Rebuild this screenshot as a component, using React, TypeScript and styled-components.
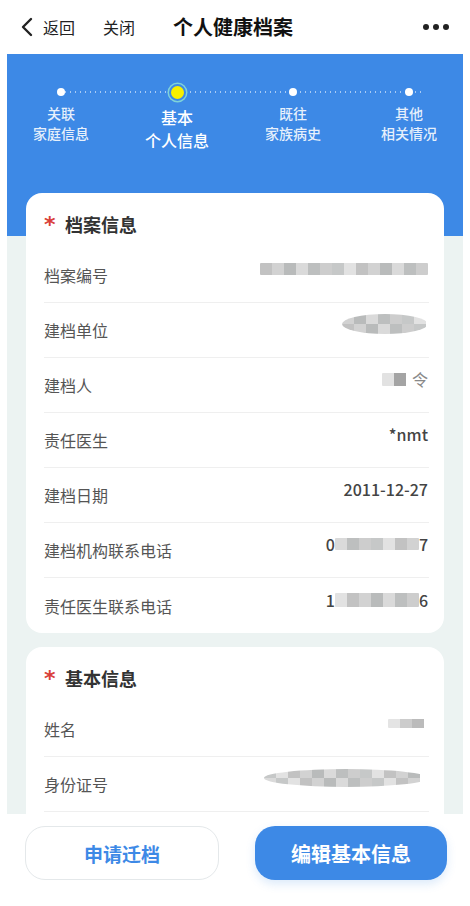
import styled, { createGlobalStyle } from "styled-components";

const colors = {
  blue: "#3d89e6",
  pageBg: "#ecf3f2",
  red: "#d9403a",
  title: "#333333",
  label: "#555555",
  value: "#444444",
  line: "#efefef",
};

const GlobalStyle = createGlobalStyle`
  html, body {
    margin: 0;
    padding: 0;
    background: #ffffff;
  }
  body {
    font-family: "Noto Sans CJK SC", "Noto Sans", sans-serif;
    -webkit-font-smoothing: antialiased;
  }
  * {
    box-sizing: border-box;
  }
`;

const NavBar = styled.header`
  height: 54px;
  display: flex;
  align-items: center;
  padding: 0 20px 0 20px;
  background: #ffffff;
  color: #111111;
`;

const NavLink = styled.span`
  font-size: 16px;
  line-height: 20px;
  color: #222222;
  margin-right: 28px;
  display: flex;
  align-items: center;
`;

const NavTitle = styled.h1`
  margin: 0 0 0 10px;
  font-size: 20px;
  font-weight: 600;
  line-height: 24px;
  color: #111111;
  flex: 1;
`;

const MoreDots = styled.div`
  display: flex;
  gap: 4px;
  margin-right: 1px;

  span {
    width: 6px;
    height: 6px;
    border-radius: 50%;
    background: #222222;
  }
`;

const Page = styled.main`
  margin: 0 7px;
  padding-bottom: 100px;
  background: linear-gradient(
    ${colors.blue} 0,
    ${colors.blue} 182px,
    ${colors.pageBg} 182px
  );
`;

const Stepper = styled.div`
  position: relative;
  display: grid;
  grid-template-columns: repeat(4, 116px);
  justify-content: center;
  padding-top: 29px;
  margin: 0 -4px;
`;

const StepLine = styled.div`
  position: absolute;
  top: 37px;
  left: 60px;
  right: 44px;
  height: 2px;
  background-image: radial-gradient(
    circle,
    rgba(255, 255, 255, 0.55) 0.9px,
    transparent 1.1px
  );
  background-size: 5px 2px;
`;

const Step = styled.div`
  position: relative;
  display: flex;
  flex-direction: column;
  align-items: center;
`;

const DotRow = styled.div`
  height: 18px;
  display: flex;
  align-items: center;
  justify-content: center;
`;

const Dot = styled.span<{ $active?: boolean }>`
  display: block;
  border-radius: 50%;
  ${(p) =>
    p.$active
      ? `
    width: 17px;
    height: 17px;
    background: #f8f000;
    border: 2px solid ${colors.blue};
    box-shadow: 0 0 0 1.5px #7fd3d8;
  `
      : `
    width: 8px;
    height: 8px;
    background: #ffffff;
  `}
`;

const StepLabel = styled.div<{ $active?: boolean }>`
  margin-top: ${(p) => (p.$active ? "5px" : "2px")};
  text-align: center;
  font-size: ${(p) => (p.$active ? "16px" : "14px")};
  line-height: ${(p) => (p.$active ? "23px" : "20px")};
  color: ${(p) => (p.$active ? "#ffffff" : "rgba(255, 255, 255, 0.88)")};
  font-weight: 500;
`;

const Cards = styled.div`
  display: flex;
  flex-direction: column;
  gap: 14px;
  padding: 41px 19px 0 19px;
`;

const Card = styled.section`
  background: #ffffff;
  border-radius: 16px;
  padding: 0 15px 0 18px;
`;

const CardHeader = styled.div`
  height: 55px;
  padding-top: 20px;
  display: flex;
  align-items: flex-start;
`;

const Star = styled.span`
  color: ${colors.red};
  font-size: 22px;
  line-height: 24px;
  font-weight: 700;
  width: 21px;
  font-family: "DejaVu Sans", sans-serif;
`;

const CardTitle = styled.h2`
  margin: 0;
  font-size: 18px;
  line-height: 22px;
  font-weight: 700;
  color: ${colors.title};
`;

const Row = styled.div`
  height: 55px;
  display: flex;
  align-items: center;
  justify-content: space-between;
  border-bottom: 1px solid ${colors.line};

  &:last-child {
    border-bottom: none;
  }
`;

const Label = styled.span`
  font-size: 16px;
  line-height: 20px;
  color: ${colors.label};
`;

const Value = styled.span`
  display: flex;
  align-items: center;
  font-size: 16px;
  line-height: 20px;
  font-weight: 500;
  color: ${colors.value};
  margin-bottom: 12px;
  margin-right: 1px;
`;

const Mosaic = styled.span<{ $h: number; $round?: boolean }>`
  display: flex;
  flex-wrap: wrap;
  height: ${(p) => p.$h}px;
  overflow: hidden;
  border-radius: ${(p) => (p.$round ? "50%" : "1px")};
`;

const Cell = styled.span<{ $w: number; $h: number }>`
  display: block;
  width: ${(p) => p.$w}px;
  height: ${(p) => p.$h}px;
`;

const Footer = styled.footer`
  position: fixed;
  left: 0;
  right: 0;
  bottom: 0;
  height: 92px;
  background: #ffffff;
  display: flex;
  align-items: flex-start;
  justify-content: space-between;
  padding: 12px 23px 0 25px;
`;

const Button = styled.button<{ $primary?: boolean }>`
  height: 54px;
  border-radius: 20px;
  font-family: inherit;
  font-size: 19px;
  font-weight: 600;
  cursor: pointer;
  ${(p) =>
    p.$primary
      ? `
    width: 192px;
    border: none;
    background: ${colors.blue};
    color: #ffffff;
    font-size: 20px;
    box-shadow: 0 4px 10px rgba(61, 137, 230, 0.18);
  `
      : `
    width: 194px;
    border: 1px solid #e4e8ea;
    background: #ffffff;
    color: ${colors.blue};
  `}
`;

type Blur = { width: number; height: number; shades: string[]; round?: boolean };

const makeShades = (seed: number, count: number) => {
  const palette = ["#cdcdcd", "#c2c2c2", "#dadada", "#c6c8c8", "#d2d2d2", "#bdbfbf", "#e2e2e2", "#b9bbbb"];
  return Array.from({ length: count }, (_, i) => palette[(i * 3 + seed) % palette.length]);
};

const Blurred = ({ width, height, shades, round }: Blur) => {
  const rows = height > 14 ? 2 : 1;
  const cellW = 12;
  const perRow = Math.ceil(width / cellW);
  return (
    <Mosaic $h={height} $round={round} style={{ width }}>
      {Array.from({ length: perRow * rows }, (_, i) => (
        <Cell key={i} $w={cellW} $h={height / rows} style={{ background: shades[i % shades.length] }} />
      ))}
    </Mosaic>
  );
};

type Field = { label: string; value: React.ReactNode };

const archiveFields: Field[] = [
  { label: "档案编号", value: <Blurred width={168} height={12} shades={makeShades(1, 14)} /> },
  { label: "建档单位", value: <Blurred width={86} height={20} shades={makeShades(4, 16)} round /> },
  {
    label: "建档人",
    value: (
      <>
        <Blurred width={30} height={13} shades={["#e2e2e2", "#a4a4a4", "#bcbcbc"]} />
        <span style={{ fontWeight: 400, color: "#888" }}>令</span>
      </>
    ),
  },
  { label: "责任医生", value: "*nmt" },
  { label: "建档日期", value: "2011-12-27" },
  {
    label: "建档机构联系电话",
    value: (
      <>
        0<Blurred width={84} height={12} shades={makeShades(2, 8)} />7
      </>
    ),
  },
  {
    label: "责任医生联系电话",
    value: (
      <>
        1<Blurred width={84} height={14} shades={makeShades(6, 8)} />6
      </>
    ),
  },
];

const basicFields: Field[] = [
  { label: "姓名", value: <Blurred width={40} height={9} shades={["#e4e4e4", "#cccccc", "#bbbbbb", "#d4d4d4"]} /> },
  { label: "身份证号", value: <Blurred width={164} height={18} shades={makeShades(3, 14)} round /> },
  { label: "性别", value: "男" },
];

const steps = [
  { top: "关联", bottom: "家庭信息" },
  { top: "基本", bottom: "个人信息", active: true },
  { top: "既往", bottom: "家族病史" },
  { top: "其他", bottom: "相关情况" },
];

const BackIcon = () => (
  <svg width="14" height="20" viewBox="0 0 14 20" style={{ marginRight: 9 }}>
    <path d="M11 2 L3 10 L11 18" fill="none" stroke="#222" strokeWidth="2.4" strokeLinecap="round" strokeLinejoin="round" />
  </svg>
);

const InfoCard = ({ title, fields }: { title: string; fields: Field[] }) => (
  <Card>
    <CardHeader>
      <Star>*</Star>
      <CardTitle>{title}</CardTitle>
    </CardHeader>
    {fields.map((f) => (
      <Row key={f.label}>
        <Label>{f.label}</Label>
        <Value>{f.value}</Value>
      </Row>
    ))}
  </Card>
);

const App = () => {
  return (
    <>
      <GlobalStyle />
      <NavBar>
        <NavLink>
          <BackIcon />
          返回
        </NavLink>
        <NavLink>关闭</NavLink>
        <NavTitle>个人健康档案</NavTitle>
        <MoreDots>
          <span />
          <span />
          <span />
        </MoreDots>
      </NavBar>

      <Page>
        <Stepper>
          <StepLine />
          {steps.map((s) => (
            <Step key={s.top}>
              <DotRow>
                <Dot $active={s.active} />
              </DotRow>
              <StepLabel $active={s.active}>
                {s.top}
                <br />
                {s.bottom}
              </StepLabel>
            </Step>
          ))}
        </Stepper>

        <Cards>
          <InfoCard title="档案信息" fields={archiveFields} />
          <InfoCard title="基本信息" fields={basicFields} />
        </Cards>
      </Page>

      <Footer>
        <Button>申请迁档</Button>
        <Button $primary>编辑基本信息</Button>
      </Footer>
    </>
  );
};

export default App;
